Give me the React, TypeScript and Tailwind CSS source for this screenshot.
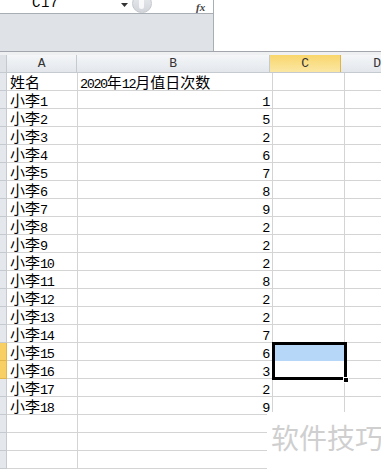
import React from 'react';

const CJK = '"Noto Sans CJK SC", sans-serif';

// split a label so CJK glyphs and ASCII glyphs get their own sizes
const Txt: React.FC<{ s: string }> = ({ s }) => {
  const parts = s.match(/[\x00-\x7f]+|[^\x00-\x7f]+/g) || [];
  return (
    <span className="block h-[16px] leading-[16px] overflow-visible">
      {parts.map((p, i) =>
        /^[\x00-\x7f]+$/.test(p) ? (
          <span key={i} className="text-[13.5px] leading-[16px] tracking-[-1.4px]" style={{ fontFamily: '"Liberation Mono", monospace' }}>
            {p}
          </span>
        ) : (
          <span key={i} className="text-[15px] leading-[16px]" style={{ fontFamily: CJK }}>
            {p}
          </span>
        )
      )}
    </span>
  );
};

const rows: [string, string][] = [
  ['姓名', '2020年12月值日次数'],
  ['小李1', '1'],
  ['小李2', '5'],
  ['小李3', '2'],
  ['小李4', '6'],
  ['小李5', '7'],
  ['小李6', '8'],
  ['小李7', '9'],
  ['小李8', '2'],
  ['小李9', '2'],
  ['小李10', '2'],
  ['小李11', '8'],
  ['小李12', '2'],
  ['小李13', '2'],
  ['小李14', '7'],
  ['小李15', '6'],
  ['小李16', '3'],
  ['小李17', '2'],
  ['小李18', '9'],
  ['', ''],
  ['', ''],
  ['', ''],
];

const App: React.FC = () => {
  return (
    <div className="relative w-[381px] h-[469px] overflow-hidden bg-white text-black">
      {/* formula bar */}
      <div className="flex h-[51px]">
        <div className="w-[214px] flex flex-col border-r border-[#a9aeb5]">
          <div className="h-[14px] bg-white border-b border-[#a9aeb5] relative">
            <span className="absolute left-[32px] -top-[4px] text-[14px] leading-[14px] tracking-[0.5px]" style={{ fontFamily: '"Liberation Mono", monospace' }}>
              C17
            </span>
            <svg className="absolute left-[121px] top-[3px]" width="7" height="4" viewBox="0 0 7 4">
              <path d="M0 0h7L3.5 4z" fill="#333" />
            </svg>
            <div className="absolute left-[132px] -top-[6px] w-[20px] h-[19px] rounded-full bg-gradient-to-b from-[#e8ebee] to-[#d2d6db] border border-[#c4c8cd]">
              <div className="absolute left-[6px] top-[2px] w-[5px] h-[12px] rounded-full bg-white/80" />
            </div>
            <span className="absolute left-[196px] top-[-1px] text-[11px] italic font-bold text-[#444]" style={{ fontFamily: '"Liberation Serif", serif' }}>
              fx
            </span>
          </div>
          <div className="flex-1 bg-[#dfe3e8]" />
        </div>
        <div className="flex-1 bg-white" />
      </div>
      <div className="h-[4px] border-t border-[#a3a7ad] bg-[#eef0f2]" />

      {/* column headers */}
      <div className="flex h-[18px] bg-gradient-to-b from-[#f4f6f8] to-[#e3e7ec] border-b border-[#c5cad1]" style={{ fontFamily: '"Liberation Mono", monospace' }}>
        <div className="w-[7px] border-r border-[#c5cad1] bg-[#dfe3e8]" />
        <div className="w-[71px] border-r border-[#c5cad1] flex items-center justify-center text-[13px] text-[#333]">A</div>
        <div className="w-[195px] border-r border-[#c5cad1] flex items-center justify-center text-[13px] text-[#333]">B</div>
        <div className="w-[72px] border-r border-[#e0b548] bg-gradient-to-b from-[#f9d66b] to-[#fbe7a3] flex items-center justify-center text-[13px] text-[#333]">C</div>
        <div className="flex-1 pl-[32px] flex items-center text-[13px] text-[#333]">D</div>
      </div>

      {/* cells */}
      {rows.map(([a, b], i) => {
        const hl = i === 15 || i === 16;
        return (
          <div key={i} className="flex h-[18px]">
            <div className={`w-[7px] border-r border-b ${hl ? 'bg-[#f7cf63] border-[#e2b54a]' : 'bg-[#e4e8ec] border-[#c5cad1]'}`} />
            <div className="w-[71px] border-r border-b border-[#d4d4d4] pl-[3px] flex items-center whitespace-nowrap">
              <Txt s={a} />
            </div>
            <div className={`w-[195px] border-r border-b border-[#d4d4d4] flex items-center whitespace-nowrap ${i === 0 ? 'pl-[2px]' : 'justify-end pr-[3px]'}`}>
              <Txt s={b} />
            </div>
            <div className="w-[72px] border-r border-b border-[#d4d4d4]" />
            <div className="flex-1 border-b border-[#d4d4d4]" />
          </div>
        );
      })}

      {/* selection C16:C17 */}
      <div className="absolute left-[272px] top-[342px] w-[75px] h-[38px] border-[3px] border-black">
        <div className="h-[16px] bg-[#b7d7f9]" />
      </div>
      <div className="absolute left-[343px] top-[377px] w-[6px] h-[6px] bg-black border border-white" />

      {/* watermark */}
      <div className="absolute left-[267px] top-[412px] right-0 bottom-0 bg-white">
        <span className="absolute left-[4px] top-[8px] text-[28px] leading-[34px] text-[#cfcfcf] whitespace-nowrap" style={{ fontFamily: CJK }}>
          软件技巧
        </span>
      </div>
    </div>
  );
};

export default App;
